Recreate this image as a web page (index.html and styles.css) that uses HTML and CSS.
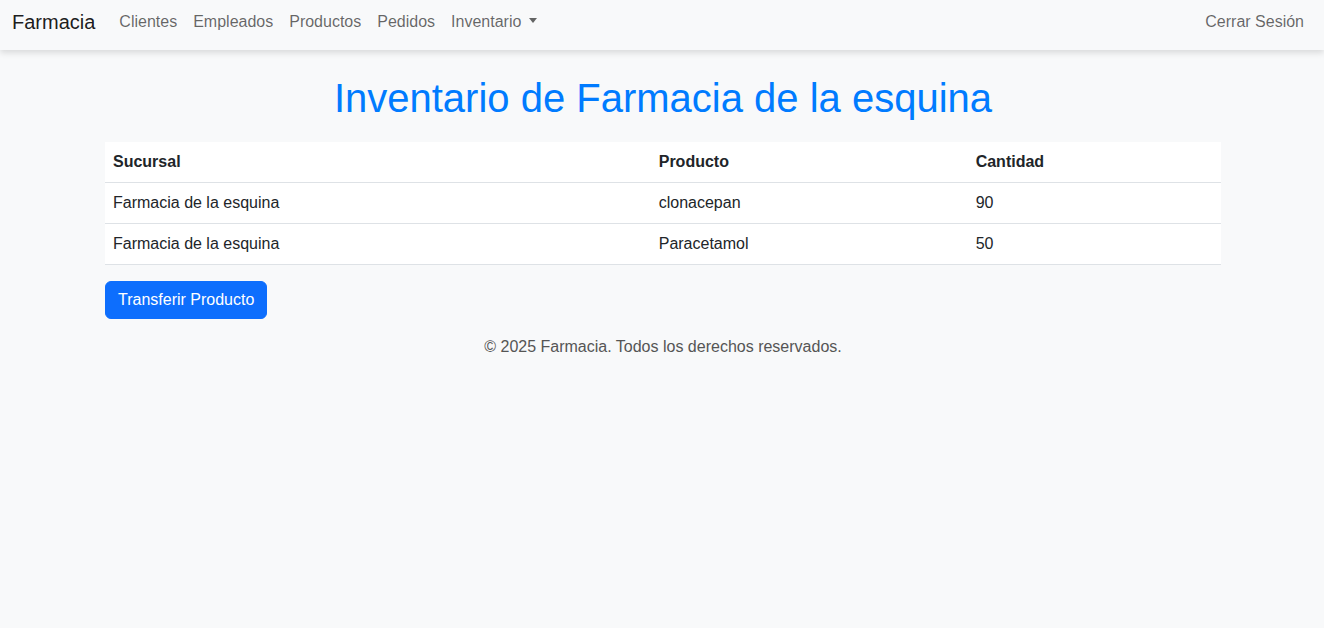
FILE: index.html
```html
<!DOCTYPE html>
<html lang="es">
<head>
<meta charset="utf-8">
<title>Inventario</title>
<link rel="stylesheet" href="styles.css">
</head>
<body>
<nav class="navbar">
  <a class="brand" href="#">Farmacia</a>
  <ul class="nav-list">
    <li><a class="nav-link" href="#">Clientes</a></li>
    <li><a class="nav-link" href="#">Empleados</a></li>
    <li><a class="nav-link" href="#">Productos</a></li>
    <li><a class="nav-link" href="#">Pedidos</a></li>
    <li><a class="nav-link dropdown" href="#">Inventario<span class="caret"></span></a></li>
  </ul>
  <ul class="nav-list nav-right">
    <li><a class="nav-link" href="#">Cerrar Sesión</a></li>
  </ul>
</nav>
<main class="container">
  <h1 class="title">Inventario de Farmacia de la esquina</h1>
  <table class="table">
    <colgroup>
      <col class="col-suc">
      <col class="col-prod">
      <col class="col-cant">
    </colgroup>
    <thead>
      <tr><th>Sucursal</th><th>Producto</th><th>Cantidad</th></tr>
    </thead>
    <tbody>
      <tr><td>Farmacia de la esquina</td><td>clonacepan</td><td>90</td></tr>
      <tr><td>Farmacia de la esquina</td><td>Paracetamol</td><td>50</td></tr>
    </tbody>
  </table>
  <a class="btn" href="#">Transferir Producto</a>
  <footer class="footer">© 2025 Farmacia. Todos los derechos reservados.</footer>
</main>
</body>
</html>
```
FILE: styles.css
```css
* { box-sizing: border-box; }
html, body { margin: 0; padding: 0; }
body {
  background: #f8f9fa;
  font-family: "Liberation Sans", Arial, sans-serif;
  font-size: 16px;
  line-height: 24px;
  color: #212529;
}
a { text-decoration: none; }
.navbar {
  display: flex;
  align-items: center;
  height: 50px;
  padding: 2px 12px 8px 12px;
  background: #f8f9fa;
  box-shadow: 0 3px 6px rgba(0, 0, 0, 0.12);
  position: relative;
}
.brand {
  font-size: 20px;
  line-height: 30px;
  padding: 5px 0;
  margin-right: 16px;
  color: rgba(0, 0, 0, 0.9);
}
.nav-list {
  display: flex;
  list-style: none;
  margin: 0;
  padding: 0;
}
.nav-right { margin-left: auto; }
.nav-link {
  display: block;
  padding: 8px;
  color: rgba(0, 0, 0, 0.6);
}
.caret {
  display: inline-block;
  margin-left: 8px;
  vertical-align: 4px;
  border-top: 5px solid;
  border-left: 4.5px solid transparent;
  border-right: 4.5px solid transparent;
}
.container {
  max-width: 1140px;
  margin: 0 auto;
  padding: 0 11px 0 13px;
}
.title {
  margin: 24px 0 20px;
  font-size: 40px;
  line-height: 48px;
  font-weight: normal;
  color: #007bff;
  text-align: center;
}
.table {
  width: 100%;
  border-collapse: collapse;
  background: #fff;
  margin-bottom: 16px;
}
.col-suc { width: 48.9%; }
.col-prod { width: 28.4%; }
.col-cant { width: 22.7%; }
.table th, .table td {
  padding: 8px;
  text-align: left;
  border-bottom: 1px solid #dee2e6;
}
.table th { font-weight: bold; }
.btn {
  display: inline-block;
  padding: 6px 12px;
  border: 1px solid #0d6efd;
  border-radius: 6px;
  background: #0d6efd;
  color: #fff;
  font-size: 16px;
  line-height: 24px;
}
.footer {
  margin-top: 16px;
  text-align: center;
  color: #555;
}
```
